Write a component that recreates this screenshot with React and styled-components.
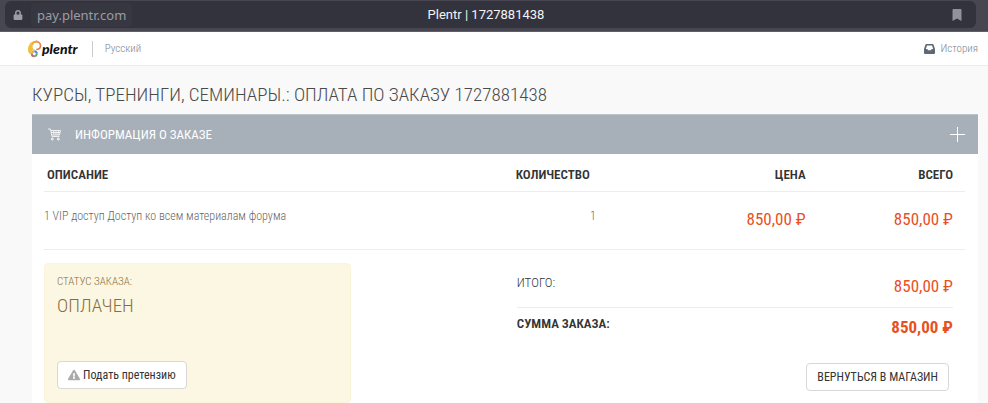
import React from 'react'
import styled, { createGlobalStyle } from 'styled-components'
import { FaBookmark, FaExclamationTriangle, FaLock } from 'react-icons/fa'

const GlobalStyle = createGlobalStyle`
  *, *::before, *::after { box-sizing: border-box; }
  body {
    margin: 0;
    background-color: #f9f9f9;
    color: #4a4a4a;
    font: 300 12px/16px 'Roboto Condensed', 'Liberation Sans Narrow', Roboto, sans-serif;
  }
  h1, h2, p { margin: 0; }
  a { text-decoration: none; }
  button { cursor: pointer; }
`

const BrowserBar = styled.div`
  height: 32px;
  padding: 1px 12px 4px 5px;
  background-color: #474651;
  border-bottom: 1px solid #5f5e69;
`

const AddressField = styled.div`
  display: grid;
  grid-template-columns: 1fr auto 1fr;
  align-items: center;
  height: 27px;
  padding: 0 13px 0 4px;
  border-radius: 6px;
  background-color: #33333d;
  color: #f4f4f6;
  font: 400 13px/24px Roboto, sans-serif;
  > svg { justify-self: end; }
`

const Address = styled.div`
  display: flex;
  align-items: center;
  gap: 3px;
  color: #9c9ca4;
  font-family: 'Noto Sans', sans-serif;
  span {
    padding: 0 6px;
    border-radius: 4px;
    background-color: #373741;
  }
  svg { margin: 0 5px 0 4px; }
`

const Header = styled.header`
  display: flex;
  align-items: center;
  height: 34px;
  padding: 0 10px 0 28px;
  border-bottom: 1px solid #ececec;
  background-color: #fff;
`

const Logo = styled.a`
  display: flex;
  align-items: center;
  color: #111;
  font: italic 900 14px/16px Lato, sans-serif;
`

const HeaderLink = styled.a`
  display: flex;
  align-items: center;
  gap: 5px;
  color: #7b858e;
  font-size: 11px;
  svg { color: #5d6a76; }
`

const Language = styled(HeaderLink)`
  margin: 0 auto 0 14px;
  padding-left: 12px;
  border-left: 1px solid #ccc;
`

const Main = styled.main`
  padding: 16px 10px 0 32px;
`

const PageTitle = styled.h1`
  font-size: 19px;
  font-weight: 300;
  line-height: 26px;
  text-transform: uppercase;
`

const Panel = styled.section`
  margin-top: 6px;
  background-color: #fff;
`

const PanelHeader = styled.div`
  display: flex;
  align-items: center;
  gap: 14px;
  height: 40px;
  padding: 0 12px 0 16px;
  border-top: 1px solid #bcc3ca;
  background-color: #a7afb8;
  color: #fff;
  h2 {
    margin-right: auto;
    font-size: 13px;
    font-weight: 400;
    text-transform: uppercase;
  }
`

const ToggleButton = styled.button`
  display: flex;
  padding: 0;
  border: 0;
  background: none;
  color: inherit;
`

const PanelBody = styled.div`
  padding: 0 13px 0 12px;
`

const OrderTable = styled.table`
  width: 100%;
  border-collapse: collapse;
  table-layout: fixed;
  tr { border-bottom: 1px solid #ededed; }
`

const HeadCell = styled.th`
  width: ${props => props.$width};
  height: 37px;
  padding: 6px ${props => props.$right || '12px'} 0 3px;
  color: #333;
  font-size: 13px;
  font-weight: 600;
  text-align: ${props => props.$align || 'right'};
  text-transform: uppercase;
`

const Cell = styled.td`
  height: 58px;
  padding: 16px ${props => props.$right || '12px'} 0 0;
  color: #666;
  text-align: ${props => props.$align || 'right'};
  vertical-align: top;
`

const Price = styled.span`
  color: #e8501f;
  font-size: 17px;
  font-weight: ${props => (props.$bold ? 700 : 400)};
  line-height: 22px;
`

const Footer = styled.div`
  display: grid;
  grid-template-columns: 1fr 2fr;
  padding-top: 13px;
`

const StatusBox = styled.div`
  display: flex;
  flex-direction: column;
  align-items: flex-start;
  height: 140px;
  padding: 10px 12px 13px;
  border: 1px solid #fbf3da;
  border-radius: 4px;
  background-color: #fcf7e3;
  color: #8a6d3b;
  text-transform: uppercase;
  p { font-size: 11px; }
  strong {
    margin-top: 3px;
    font-size: 19px;
    font-weight: 300;
    line-height: 26px;
  }
  button { margin-top: auto; }
`

const Button = styled.button`
  display: flex;
  align-items: center;
  gap: 3px;
  height: 28px;
  padding: 0 10px;
  border: 1px solid #d8d8d8;
  border-radius: 4px;
  background-color: #fff;
  color: #333;
  font: inherit;
  font-weight: 400;
  text-transform: ${props => (props.$upper ? 'uppercase' : 'none')};
  svg { color: #aaa; }
`

const Summary = styled.div`
  display: flex;
  flex-direction: column;
  width: 73%;
  margin-left: auto;
  padding-right: 12px;
  > button {
    align-self: flex-end;
    margin: 17px 4px 0 0;
  }
`

const SummaryRow = styled.div`
  display: flex;
  justify-content: space-between;
  padding: ${props => (props.$total ? '8px 0' : '12px 0 10px')};
  border-top: ${props => (props.$total ? '1px solid #ececec' : '0')};
  color: #333;
  font-size: 13px;
  font-weight: ${props => (props.$total ? 600 : 300)};
  text-transform: uppercase;
`

const LogoMark = () => (
  <svg width='14' height='18' viewBox='0 0 14 18' fill='none'>
    <path d='M6.500 1C2.500 1.500 0 5.500 0 9.500c0 2.200.9 4 2.500 5L4 10.500l3-.5C4.500 9 4 6.500 5 4.200 5.600 2.800 7 2 8.500 2Z' fill='#f1c03a' />
    <path d='M6.200 2.300c3-1.800 6.300.2 6.300 3.200 0 2.500-2 4-4.300 4' stroke='#e07f45' strokeWidth='1.600' />
    <path d='M4.500 4.500c.8-2.400 3-3.600 5-2.900' stroke='#f0a63c' strokeWidth='1.600' />
    <path d='M3.800 13.700a2.500 2.500 0 0 1 2.500-2.500' stroke='#e9a93a' strokeWidth='2' />
    <path d='M6.300 11.200a2.500 2.500 0 0 1 2.500 2.500' stroke='#4a8fd0' strokeWidth='2' />
    <path d='M8.800 13.700a2.500 2.500 0 0 1-2.500 2.500' stroke='#5fae6a' strokeWidth='2' />
    <path d='M6.300 16.200a2.500 2.500 0 0 1-2.500-2.500' stroke='#c06a78' strokeWidth='2' />
  </svg>
)

const InboxIcon = () => (
  <svg width='11' height='10' viewBox='0 0 11 10' fill='currentColor'>
    <path
      fillRule='evenodd'
      d='M3 0h5c1 0 1.500.5 1.800 1.300L11 5v4a1 1 0 0 1-1 1H1a1 1 0 0 1-1-1V5l1.200-3.700C1.500.5 2 0 3 0ZM3 1.500L1.800 5H3.300L4 6.300h3l.7-1.300h1.500L8 1.500Z'
    />
  </svg>
)

const CartIcon = () => (
  <svg width='13' height='14' viewBox='0 0 13 14' fill='none' stroke='currentColor'>
    <path d='M0 1h2.500L4 8.500h7.500M2.700 2.500h9.800l-1 4.500H3.700M3 4.500h9M5.500 2.500l.5 4.500M8 2.500V7M10.500 2.500L10 7' strokeWidth='.8' />
    <circle cx='4.300' cy='11' r='1' />
    <circle cx='10.300' cy='11' r='1' />
  </svg>
)

const PlusIcon = () => (
  <svg width='17' height='17' viewBox='0 0 17 17' stroke='currentColor'>
    <path d='M8.500 1v15M1 8.500h15' />
  </svg>
)

const App = () => (
  <>
    <GlobalStyle />
    <BrowserBar>
      <AddressField>
        <Address>
          <FaLock size={10} />
          <span>pay.plentr.com</span>
        </Address>
        <div>Plentr | 1727881438</div>
        <FaBookmark size={12} color='#92929a' />
      </AddressField>
    </BrowserBar>
    <Header>
      <Logo href='#'>
        <LogoMark />
        plentr
      </Logo>
      <Language href='#'>Русский</Language>
      <HeaderLink href='#'>
        <InboxIcon />
        История
      </HeaderLink>
    </Header>
    <Main>
      <PageTitle>Курсы, тренинги, семинары.: Оплата по заказу 1727881438</PageTitle>
      <Panel>
        <PanelHeader>
          <CartIcon />
          <h2>Информация о заказе</h2>
          <ToggleButton type='button' aria-label='Информация о заказе' aria-expanded='true'>
            <PlusIcon />
          </ToggleButton>
        </PanelHeader>
        <PanelBody>
          <OrderTable>
            <thead>
              <tr>
                <HeadCell $width='48%' $align='left'>Описание</HeadCell>
                <HeadCell $width='13%' $right='16px'>Количество</HeadCell>
                <HeadCell $width='23%'>Цена</HeadCell>
                <HeadCell $width='16%'>Всего</HeadCell>
              </tr>
            </thead>
            <tbody>
              <tr>
                <Cell $align='left'>1 VIP доступ Доступ ко всем материалам форума</Cell>
                <Cell $right='10px'>1</Cell>
                <Cell><Price>850,00 ₽</Price></Cell>
                <Cell><Price>850,00 ₽</Price></Cell>
              </tr>
            </tbody>
          </OrderTable>
          <Footer>
            <StatusBox>
              <p>Статус заказа:</p>
              <strong>Оплачен</strong>
              <Button type='button'>
                <FaExclamationTriangle size={12} />
                Подать претензию
              </Button>
            </StatusBox>
            <Summary>
              <SummaryRow>
                <span>Итого:</span>
                <Price>850,00 ₽</Price>
              </SummaryRow>
              <SummaryRow $total>
                <span>Сумма заказа:</span>
                <Price $bold>850,00 ₽</Price>
              </SummaryRow>
              <Button type='button' $upper>Вернуться в магазин</Button>
            </Summary>
          </Footer>
        </PanelBody>
      </Panel>
    </Main>
  </>
)

export default App
